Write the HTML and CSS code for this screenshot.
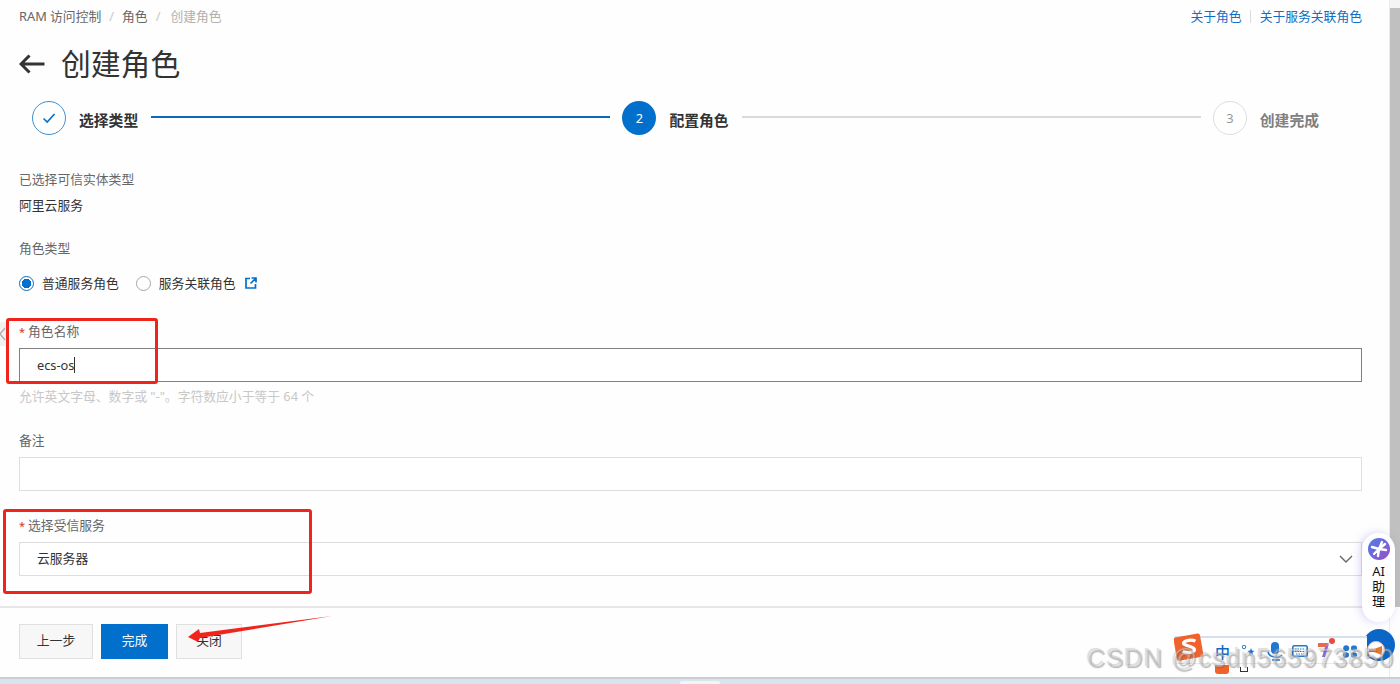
FILE: index.html
```html
<!DOCTYPE html>
<html lang="zh-CN">
<head>
<meta charset="utf-8">
<title>创建角色</title>
<link rel="stylesheet" href="styles.css">
</head>
<body>
<div class="window">
  <div class="workspace">
    <main class="main">
      <header class="topbar">
        <nav class="crumbs">
          <span>RAM 访问控制</span><i class="slash">/</i><span>角色</span><i class="slash">/</i><span class="crumb-current">创建角色</span>
        </nav>
        <div class="links">
          <a>关于角色</a><i class="link-sep"></i><a>关于服务关联角色</a>
        </div>
      </header>

      <div class="title-row">
        <svg class="back" viewBox="0 0 26 20" width="26" height="20"><path d="M25.5 10H2M10.5 1.5 2 10l8.500 8.500" fill="none" stroke="#333" stroke-width="3"/></svg>
        <h1 class="title">创建角色</h1>
      </div>

      <ol class="steps">
        <li class="step">
          <span class="dot dot-done"><svg viewBox="0 0 14 12" width="14" height="12"><path d="M1.500 6.500 5.200 10 12.500 2" fill="none" stroke="#0070cc" stroke-width="1.600"/></svg></span>
          <span class="step-label">选择类型</span>
          <span class="step-line step-line-done"></span>
        </li>
        <li class="step">
          <span class="dot dot-active">2</span>
          <span class="step-label">配置角色</span>
          <span class="step-line"></span>
        </li>
        <li class="step step-last">
          <span class="dot dot-todo">3</span>
          <span class="step-label step-label-todo">创建完成</span>
        </li>
      </ol>

      <form class="form">
        <div class="label label-first">已选择可信实体类型</div>
        <div class="value">阿里云服务</div>

        <div class="label label-type">角色类型</div>
        <div class="radios">
          <span class="radio radio-on"></span><span class="radio-text">普通服务角色</span>
          <span class="radio radio-second"></span><span class="radio-text">服务关联角色</span>
          <svg class="ext" viewBox="0 0 12 12" width="12" height="12"><path d="M5 1.500H1v9.500h9.500V7M6.500 1H11v4.500M11 1 5.500 6.500" fill="none" stroke="#0070cc" stroke-width="1.700"/></svg>
        </div>

        <div class="label label-field"><span class="req">*</span>角色名称</div>
        <div class="input input-focus"><span>ecs-os</span><span class="caret"></span></div>
        <div class="hint">允许英文字母、数字或 "-"。字符数应小于等于 64 个</div>

        <div class="label label-field label-after-hint">备注</div>
        <div class="input"></div>

        <div class="label label-field label-after-hint"><span class="req">*</span>选择受信服务</div>
        <div class="input input-select">
          <span class="select-text">云服务器</span>
          <svg viewBox="0 0 14 8" width="14" height="8"><path d="M1 1l6 6 6-6" fill="none" stroke="#666" stroke-width="1.400"/></svg>
        </div>
      </form>

      <footer class="actions">
        <button type="button" class="btn">上一步</button>
        <button type="button" class="btn btn-primary">完成</button>
        <button type="button" class="btn btn-close">关闭</button>
      </footer>
    </main>
    <div class="scrollbar"><span class="scroll-up"></span><span class="scroll-thumb"></span></div>
  </div>
  <div class="strip"><span class="strip-tab"></span></div>
</div>

<span class="edge-handle"><svg viewBox="0 0 8 14" width="8" height="14"><path d="M6 1 1 7l5 6" fill="none" stroke="#aaa" stroke-width="1.200"/></svg></span>

<span class="mark mark-name"></span>
<span class="mark mark-service"></span>
<svg class="mark-arrow" viewBox="0 0 150 30" width="150" height="30"><polygon points="147,1 15,18 14,14 3,22 13,27 15,23" fill="#f0241c"/></svg>

<aside class="assistant">
  <svg viewBox="0 0 22 22" width="22" height="22">
    <defs><linearGradient id="ai" x1="0" y1="0" x2="1" y2="1"><stop offset="0" stop-color="#4d7de8"/><stop offset="1" stop-color="#9a4fc8"/></linearGradient></defs>
    <circle cx="11" cy="11" r="11" fill="url(#ai)"/>
    <path d="M14 4l-3 7-1 7M4 9l7 2 7 1M11 11l-5 5M11 11l6-5" fill="none" stroke="#fff" stroke-width="2.400" stroke-linecap="round"/>
  </svg>
  <span class="assistant-text">AI</span>
  <span class="assistant-text">助</span>
  <span class="assistant-text">理</span>
</aside>

<div class="ime-disc"></div>
<div class="ime">
  <span class="ime-tail"></span>
  <svg class="ime-logo" viewBox="0 0 28 28" width="30" height="30"><rect x="1" y="3" width="25" height="22" rx="2" fill="#f0622a" transform="rotate(-10 14 14)"/><path d="M20 8.500C17 7 10 7.500 9 10c-1 3 9 3 10 6 .5 3-6 4-11 2" fill="none" stroke="#fff" stroke-width="3"/></svg>
  <span class="ime-zh">中</span>
  <svg class="ime-dots" viewBox="0 0 14 12" width="14" height="12"><circle cx="2" cy="2" r="1.800" fill="none" stroke="#1f78d1"/><path d="M9 3l1 2.500 2.500.5-2 1.500.5 2.500-2-1.500-2 1.500.5-2.500-2-1.500L8 5.500z" fill="#1f78d1"/></svg>
  <svg class="ime-mic" viewBox="0 0 16 20" width="16" height="20"><rect x="4" y="0" width="8" height="12" rx="4" fill="#1f78d1"/><path d="M1 10c1 5 10 7 14 3M5 18h8" fill="none" stroke="#1f78d1" stroke-width="1.500"/></svg>
  <svg class="ime-keys" viewBox="0 0 16 12" width="16" height="12"><rect x=".8" y=".8" width="14.400" height="10.400" rx="1.500" fill="none" stroke="#1f78d1" stroke-width="1.600"/><path d="M3 4h10M3 6.500h10M4 9h8" stroke="#1f78d1" stroke-dasharray="1.500 1"/></svg>
  <svg class="ime-seven" viewBox="0 0 18 20" width="18" height="20"><circle cx="15" cy="3" r="3" fill="#ea4b3c"/><path d="M1 5h11l-3 4H1z" fill="#ea6a4c"/><path d="M12 6l-4 13h-3l3-10z" fill="#8c6ad8"/></svg>
  <svg class="ime-grid" viewBox="0 0 14 13" width="14" height="13"><circle cx="3.200" cy="3.200" r="3" fill="#1f78d1"/><rect x="8" y=".5" width="6" height="5" rx="2" fill="#1f78d1"/><rect x="0" y="7.500" width="6" height="5" rx="2" fill="#1f78d1"/><rect x="8" y="7.500" width="6" height="5" rx="2" fill="#1f78d1"/></svg>
  <svg class="ime-horn" viewBox="0 0 18 20" width="18" height="20"><circle cx="9" cy="9" r="8.500" fill="#fff" stroke="#f2b8b0"/><path d="M2 8h5l8-3v9l-8-3H2z" fill="#e9762b"/></svg>
</div>
<span class="ime-foot"></span>
<span class="watermark">CSDN @csdn565973850</span>
</body>
</html>
```
FILE: styles.css
```css
* { box-sizing: border-box; }
html, body { margin: 0; height: 100%; overflow: hidden; background: #fff; }
body {
  font-family: "Noto Sans", "Noto Sans CJK SC", sans-serif;
  font-size: 12.8px;
  line-height: 20px;
  color: #333;
  position: relative;
}
.window { height: 684px; display: flex; flex-direction: column; }
.workspace { flex: 1; display: flex; min-height: 0; }
.main { flex: 1; min-width: 0; display: flex; flex-direction: column; background: #fefefe; }

.topbar { height: 32px; padding: 0 27px 0 19px; display: flex; align-items: center; justify-content: space-between; }
.crumbs { display: flex; align-items: center; color: #666; }
.slash { font-style: normal; color: #c8c8c8; margin: 0 8px; }
.crumb-current { color: #b0b0b0; margin-left: 2px; }
.links { display: flex; align-items: center; color: #0f6fc6; }
.link-sep { width: 1px; height: 13px; background: #dcdcdc; margin: 0 9px 0 8px; }

.title-row { height: 40px; margin-top: 12px; padding-left: 19px; display: flex; align-items: center; gap: 16px; }
.back { flex: none; }
.title { margin: 0; font-size: 29.8px; line-height: 40px; font-weight: 400; color: #333; }

.steps { list-style: none; margin: 17px 0 0; padding: 0 70px 0 32px; height: 34px; display: flex; }
.step { flex: 1; display: flex; align-items: center; }
.step-last { flex: none; }
.dot { flex: none; width: 34px; height: 34px; border-radius: 50%; display: flex; align-items: center; justify-content: center; font-size: 12.8px; }
.dot-done { border: 1px solid #3f8fd0; background: #fff; }
.dot-active { background: #0070cc; color: #fff; }
.dot-todo { border: 1px solid #dedede; color: #999; background: #fff; }
.step-label { margin-left: 13px; font-size: 14.8px; font-weight: 700; color: #333; position: relative; top: 2px; }
.step-label-todo { color: #808080; }
.step-line { flex: 1; height: 2px; margin: -2px 12px 0 13px; background: #d9d9d9; }
.step-line-done { background: #0d68bb; }

.form { padding: 0 27px 0 19px; display: flex; flex-direction: column; }
.label { color: #666; height: 20px; }
.label-first { margin-top: 34px; }
.value { margin-top: 6px; height: 20px; color: #333; }
.label-type { margin-top: 23px; }
.radios { margin-top: 15px; height: 20px; display: flex; align-items: center; }
.radio { flex: none; width: 15px; height: 15px; border-radius: 50%; border: 1px solid #a8a8a8; background: #fff; }
.radio-on { border-color: #0070cc; background: radial-gradient(circle, #0070cc 0 4.5px, #fff 5px); }
.radio-second { margin-left: 17px; }
.radio-text { margin-left: 8px; color: #333; }
.ext { margin-left: 9px; flex: none; }
.label-field { margin-top: 28px; }
.label-after-hint { margin-top: 24px; }
.req { color: #d93026; margin-right: 3px; font-size: 11px; }
.input { margin-top: 7px; height: 34px; padding: 0 8px 0 17px; border: 1px solid #dedede; background: #fff; display: flex; align-items: center; color: #333; }
.input-focus { border-color: #808080; }
.input-select { justify-content: space-between; }
.select-text { margin-top: -3px; }
.caret { width: 1px; height: 16px; background: #333; }
.hint { margin-top: 4px; height: 20px; color: #c8c8c8; }

.actions { margin-top: 30px; padding: 16px 19px 0; border-top: 2px solid #e6e6e6; display: flex; gap: 8px; flex: 1; }
.btn { height: 35px; padding: 0 0 3px; font: inherit; border: 1px solid #e0e0e0; background: #f7f7f7; color: #333; width: 74px; border-radius: 0; }
.btn-primary { width: 67px; background: #0070cc; border-color: #0070cc; color: #fff; }
.btn-close { width: 66px; }

.scrollbar { flex: none; width: 11px; display: flex; flex-direction: column; background: #fdfdfd; border-left: 1px solid #ececec; }
.scroll-up { height: 8px; background: #f4f4f4; }
.scroll-thumb { height: 599px; background: #c0c0c0; }

.strip { flex: none; height: 7px; border-top: 2px solid #c9cfd4; background: #d8e5ef; position: relative; display: flex; justify-content: center; }
.strip-tab { width: 40px; height: 5px; margin-top: 2px; background: #f2f4f6; border-radius: 2px 2px 0 0; }

.edge-handle { position: absolute; left: -1px; top: 322px; width: 10px; height: 24px; background: #f1f1f1; display: flex; align-items: center; }

.mark { position: absolute; border: 3px solid #f0241c; border-radius: 3px; }
.mark-name { left: 6px; top: 318px; width: 152px; height: 66px; }
.mark-service { left: 3px; top: 509px; width: 309px; height: 85px; }
.mark-arrow { position: absolute; left: 185px; top: 615px; }

.assistant { position: absolute; left: 1362px; top: 533px; width: 33px; height: 89px; border-radius: 17px; background: #fff; box-shadow: -2px 0 8px rgba(110, 90, 220, .25); display: flex; flex-direction: column; align-items: center; padding-top: 5px; }
.assistant-text { font-size: 13px; line-height: 15px; color: #111; }
.assistant svg { margin-bottom: 4px; flex: none; }

.ime-disc { position: absolute; left: 1363px; top: 629px; width: 32px; height: 32px; border-radius: 50%; background: #0a67c8; }
.ime { position: absolute; left: 1175px; top: 636px; width: 192px; height: 28px; display: block; background: #fff; border-top: 2px solid #d6e0f0; border-bottom: 1px solid #e4eaf4; }
.ime > svg, .ime > span { position: absolute; }
.ime-logo { left: -1px; top: -6px; }
.ime-tail { left: 40px; top: 27px; width: 14px; height: 9px; background: #f0622a; border-radius: 0 0 3px 3px; }
.ime-zh { left: 40px; top: 5px; font-size: 15px; line-height: 18px; color: #1268c4; font-weight: 500; }
.ime-dots { left: 67px; top: 7px; }
.ime-mic { left: 92px; top: 4px; }
.ime-keys { left: 117px; top: 7px; }
.ime-seven { left: 142px; top: 0; }
.ime-grid { left: 168px; top: 7px; }
.ime-horn { left: 192px; top: 3px; }
.ime-foot { position: absolute; left: 1240px; top: 667px; width: 8px; height: 5px; border: 1px solid #333; border-top: 0; }
.watermark { position: absolute; left: 1087px; top: 643px; font-family: "Liberation Sans", sans-serif; font-size: 25px; line-height: 30px; letter-spacing: 1.400px; white-space: nowrap; color: rgba(235, 235, 235, .4); text-shadow: 1px 1px 1px rgba(95, 95, 95, .45), -1px -1px 1px rgba(140, 140, 140, .3); }
```
